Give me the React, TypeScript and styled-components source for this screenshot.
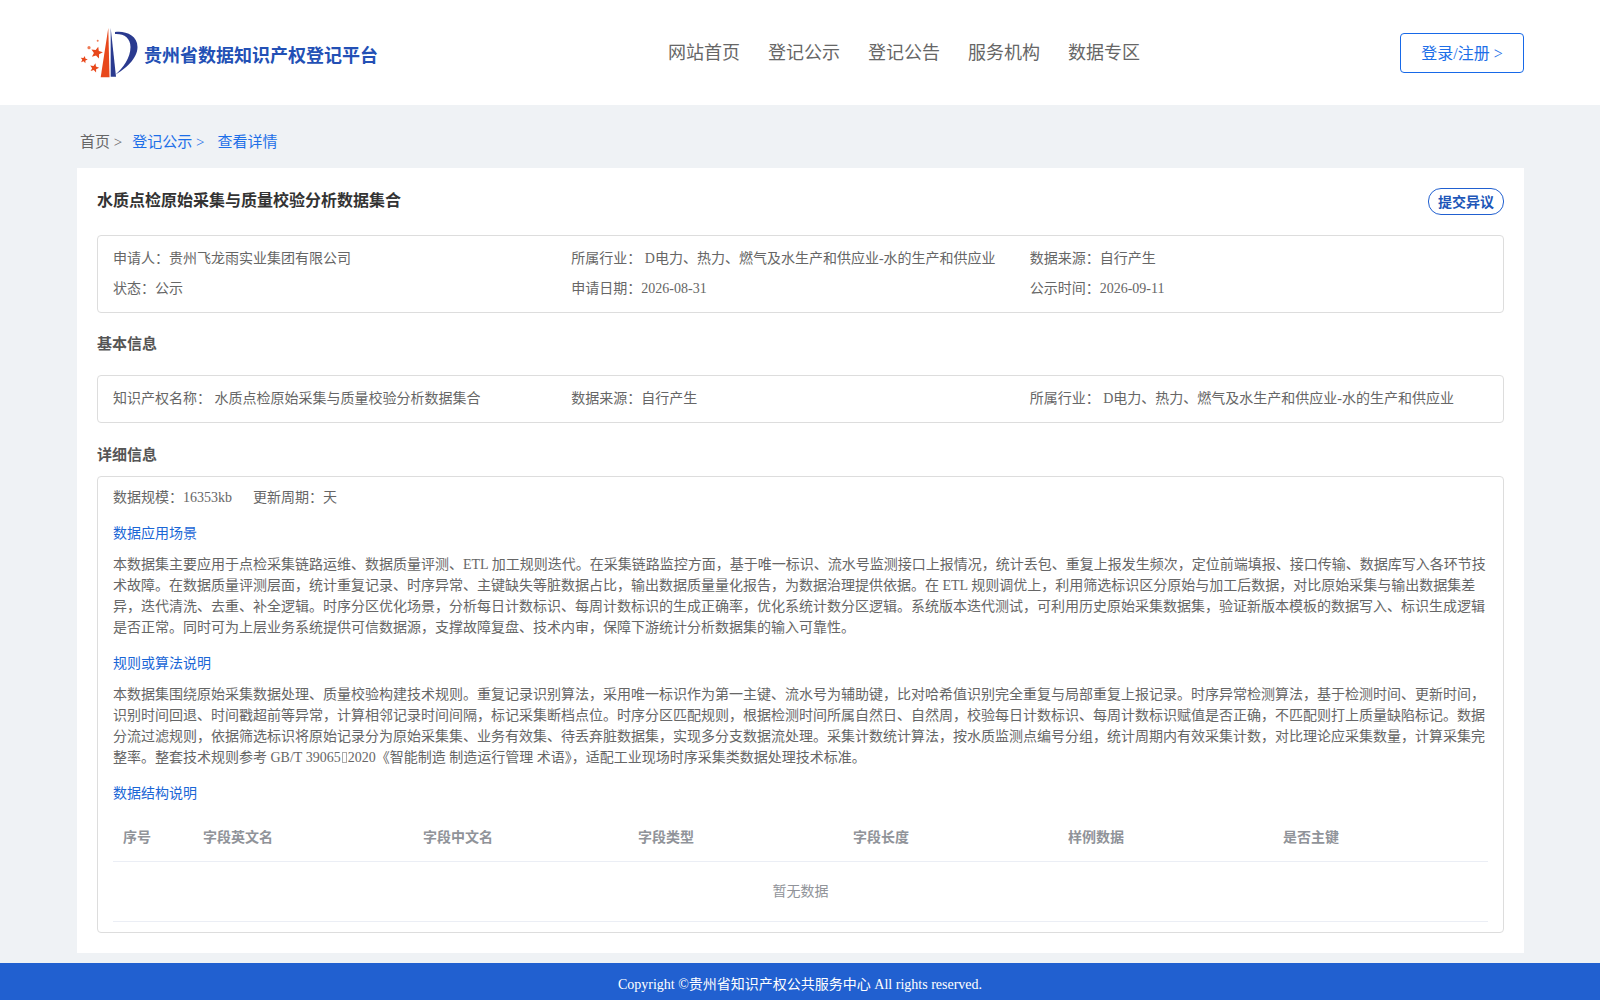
import React from 'react';
import styled, {createGlobalStyle} from 'styled-components';

const GlobalStyle = createGlobalStyle`
	html, body {
		margin: 0;
		padding: 0;
		background: #eff2f5;
		font-family: "Liberation Serif", "Noto Sans CJK SC", serif;
		color: #666;
		font-size: 14px;
	}

	#root {
		height: 100vh;
		overflow: hidden;
	}
`;

const Header = styled.header`
	display: flex;
	align-items: center;
	height: 105px;
	padding: 0 76px 0 79px;
	background: #fff;
`;

const Brand = styled.div`
	display: flex;
	align-items: center;
	gap: 5px;
	width: 589px;
`;

const BrandName = styled.span`
	margin-top: 2px;
	font-size: 18px;
	font-weight: 700;
	color: #2350b5;
`;

const Nav = styled.nav`
	display: flex;
	flex: 1;
	gap: 28px;
	margin-bottom: 4px;
`;

const NavLink = styled.a`
	font-size: 18px;
	color: #666;
`;

const LoginButton = styled.button`
	width: 124px;
	height: 40px;
	padding: 0 0 2px;
	border: 1px solid #1769e8;
	border-radius: 4px;
	background: #fff;
	color: #1d6fe8;
	font: inherit;
	font-size: 16px;
`;

const Main = styled.main`
	padding: 26px 76px 10px 77px;
`;

const Breadcrumb = styled.div`
	display: flex;
	height: 23px;
	margin: 0 0 14px 3px;
	font-size: 15px;
	line-height: 23px;
`;

const Crumb = styled.span<{$link?: boolean}>`
	margin-right: ${props => props.$link ? '13px' : '10px'};
	color: ${props => props.$link ? '#1d6fe8' : '#666'};
`;

const Card = styled.section`
	padding: 20px;
	background: #fff;
`;

const TitleRow = styled.div`
	display: flex;
	justify-content: space-between;
	align-items: flex-start;
	height: 27px;
	margin-bottom: 20px;
`;

const Title = styled.h1`
	margin: 0;
	font-size: 16px;
	font-weight: 700;
	line-height: 25px;
	color: #333;
`;

const DisputeButton = styled.button`
	width: 76px;
	height: 27px;
	padding: 0 0 2px;
	border: 1px solid #2160d0;
	border-radius: 13px;
	background: #fff;
	color: #2056b8;
	font: inherit;
	font-size: 14px;
	font-weight: 700;
`;

const InfoBox = styled.div`
	display: grid;
	grid-template-columns: repeat(3, 1fr);
	padding: 8px 15px;
	border: 1px solid #ddd;
	border-radius: 4px;
	line-height: 30px;
`;

const SectionTitle = styled.h2<{$top: number; $bottom: number}>`
	margin: ${props => props.$top}px 0 ${props => props.$bottom}px;
	font-size: 15px;
	font-weight: 700;
	line-height: 21px;
	color: #555;
`;

const DetailBox = styled.div`
	padding: 10px 15px;
	border: 1px solid #ddd;
	border-radius: 4px;
	line-height: 21px;
`;

const MetaRow = styled.div`
	display: flex;
	gap: 21px;
`;

const SubTitle = styled.h3`
	margin: 15px 0 10px;
	font-size: 14px;
	font-weight: 400;
	line-height: 21px;
	color: #1a66d6;
`;

const Paragraph = styled.p`
	margin: 0;
`;

// the reference shows a missing-glyph box between 39065 and 2020
const MissingGlyph = styled.span`
	display: inline-block;
	box-sizing: border-box;
	width: 5px;
	height: 11px;
	margin: 0 1px;
	border: 1px solid #aaa;
	vertical-align: -1px;
`;

const Table = styled.table`
	width: 100%;
	table-layout: fixed;
	border-collapse: collapse;
`;

const Th = styled.th<{$width: number}>`
	box-sizing: border-box;
	width: ${props => props.$width}px;
	padding: 12px 10px;
	border-bottom: 1px solid #ebeef5;
	font-weight: 700;
	line-height: 23px;
	text-align: left;
	color: #909399;
`;

const EmptyCell = styled.td`
	height: 59px;
	padding: 0;
	border-bottom: 1px solid #ebeef5;
	text-align: center;
	color: #909399;
`;

const Footer = styled.footer`
	height: 44px;
	background: #2160d0;
	color: #fff;
	font-size: 14px;
	line-height: 44px;
	text-align: center;
`;

const Star = ({x, y, r, fill}: {x: number; y: number; r: number; fill: string}): JSX.Element => {
	const points: string[] = [];
	for (let i = 0; i < 10; i++) {
		const radius = i % 2 === 0 ? r : r * 0.45;
		const angle = (Math.PI / 5) * i - Math.PI / 2 + 0.25;
		points.push(`${(x + radius * Math.cos(angle)).toFixed(2)},${(y + radius * Math.sin(angle)).toFixed(2)}`);
	}

	return <polygon points={points.join(' ')} fill={fill}/>;
};

const Logo = (): JSX.Element => (
	<svg width="60" height="52" viewBox="0 0 60 52" aria-label="logo">
		<path d="M29.3 1 L30.5 50.3 L21.7 50.3 Z" fill="#e8481c"/>
		<path d="M31.7 1 L37 49.7 L31.7 49.7 Z" fill="#2a3a8f"/>
		<path d="M36 5 C46 3.5 58.5 8 58.5 20 C58.5 32 46 42 36 48 C44 41 51.5 31 51.5 20 C51.5 11 45 6.5 36 7 Z" fill="#2a3a8f"/>
		<Star x={17.7} y={25.7} r={6.2} fill="#e8481c"/>
		<Star x={5} y={32.7} r={3.8} fill="#e8481c"/>
		<Star x={15.3} y={41} r={4.8} fill="#e8481c"/>
		<circle cx={10} cy={20.7} r={1.6} fill="#ee7a55"/>
		<circle cx={18.7} cy={13.7} r={1} fill="#ee7a55"/>
	</svg>
);

const navItems = ['网站首页', '登记公示', '登记公告', '服务机构', '数据专区'];

const columns: Array<[string, number]> = [
	['序号', 80],
	['字段英文名', 220],
	['字段中文名', 215],
	['字段类型', 215],
	['字段长度', 215],
	['样例数据', 215],
	['是否主键', 215]
];

const App = (): JSX.Element => (
	<>
		<GlobalStyle/>
		<Header>
			<Brand>
				<Logo/>
				<BrandName>贵州省数据知识产权登记平台</BrandName>
			</Brand>
			<Nav>
				{navItems.map(item => <NavLink key={item}>{item}</NavLink>)}
			</Nav>
			<LoginButton>登录/注册 &gt;</LoginButton>
		</Header>
		<Main>
			<Breadcrumb>
				<Crumb>首页 &gt;</Crumb>
				<Crumb $link>登记公示 &gt;</Crumb>
				<Crumb $link>查看详情</Crumb>
			</Breadcrumb>
			<Card>
				<TitleRow>
					<Title>水质点检原始采集与质量校验分析数据集合</Title>
					<DisputeButton>提交异议</DisputeButton>
				</TitleRow>
				<InfoBox>
					<span>申请人：贵州飞龙雨实业集团有限公司</span>
					<span>所属行业： D电力、热力、燃气及水生产和供应业-水的生产和供应业</span>
					<span>数据来源：自行产生</span>
					<span>状态：公示</span>
					<span>申请日期：2026-08-31</span>
					<span>公示时间：2026-09-11</span>
				</InfoBox>
				<SectionTitle $top={21} $bottom={20}>基本信息</SectionTitle>
				<InfoBox>
					<span>知识产权名称： 水质点检原始采集与质量校验分析数据集合</span>
					<span>数据来源：自行产生</span>
					<span>所属行业： D电力、热力、燃气及水生产和供应业-水的生产和供应业</span>
				</InfoBox>
				<SectionTitle $top={22} $bottom={10}>详细信息</SectionTitle>
				<DetailBox>
					<MetaRow>
						<span>数据规模：16353kb</span>
						<span>更新周期：天</span>
					</MetaRow>
					<SubTitle>数据应用场景</SubTitle>
					<Paragraph>本数据集主要应用于点检采集链路运维、数据质量评测、ETL 加工规则迭代。在采集链路监控方面，基于唯一标识、流水号监测接口上报情况，统计丢包、重复上报发生频次，定位前端填报、接口传输、数据库写入各环节技术故障。在数据质量评测层面，统计重复记录、时序异常、主键缺失等脏数据占比，输出数据质量量化报告，为数据治理提供依据。在 ETL 规则调优上，利用筛选标识区分原始与加工后数据，对比原始采集与输出数据集差异，迭代清洗、去重、补全逻辑。时序分区优化场景，分析每日计数标识、每周计数标识的生成正确率，优化系统计数分区逻辑。系统版本迭代测试，可利用历史原始采集数据集，验证新版本模板的数据写入、标识生成逻辑是否正常。同时可为上层业务系统提供可信数据源，支撑故障复盘、技术内审，保障下游统计分析数据集的输入可靠性。</Paragraph>
					<SubTitle>规则或算法说明</SubTitle>
					<Paragraph>本数据集围绕原始采集数据处理、质量校验构建技术规则。重复记录识别算法，采用唯一标识作为第一主键、流水号为辅助键，比对哈希值识别完全重复与局部重复上报记录。时序异常检测算法，基于检测时间、更新时间，识别时间回退、时间戳超前等异常，计算相邻记录时间间隔，标记采集断档点位。时序分区匹配规则，根据检测时间所属自然日、自然周，校验每日计数标识、每周计数标识赋值是否正确，不匹配则打上质量缺陷标记。数据分流过滤规则，依据筛选标识将原始记录分为原始采集集、业务有效集、待丢弃脏数据集，实现多分支数据流处理。采集计数统计算法，按水质监测点编号分组，统计周期内有效采集计数，对比理论应采集数量，计算采集完整率。整套技术规则参考 GB/T 39065<MissingGlyph/>2020《智能制造 制造运行管理 术语》，适配工业现场时序采集类数据处理技术标准。</Paragraph>
					<SubTitle>数据结构说明</SubTitle>
					<Table>
						<thead>
							<tr>
								{columns.map(([name, width]) => <Th key={name} $width={width}>{name}</Th>)}
							</tr>
						</thead>
						<tbody>
							<tr>
								<EmptyCell colSpan={columns.length}>暂无数据</EmptyCell>
							</tr>
						</tbody>
					</Table>
				</DetailBox>
			</Card>
		</Main>
		<Footer>Copyright ©贵州省知识产权公共服务中心 All rights reserved.</Footer>
	</>
);

export default App;
